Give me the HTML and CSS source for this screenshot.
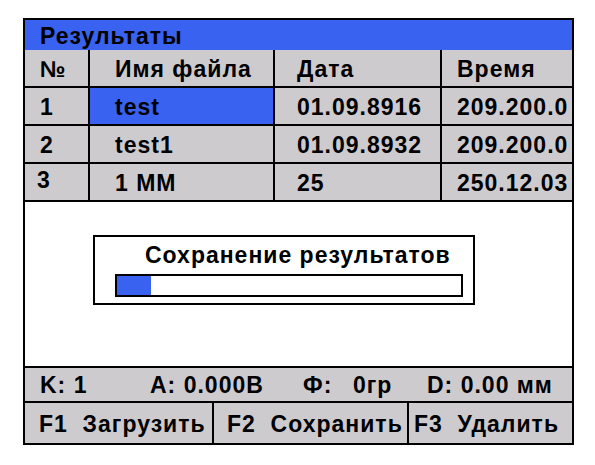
FILE: index.html
```html
<!DOCTYPE html>
<html lang="ru">

<head>
    <meta charset="UTF-8">
    <title>Результаты</title>
    <link rel="stylesheet" href="styles.css">
</head>

<body>
    <div class="screen">
        <div class="title">Результаты</div>

        <div class="grid">
            <div class="cell">№</div>
            <div class="cell name">Имя файла</div>
            <div class="cell date">Дата</div>
            <div class="cell">Время</div>

            <div class="cell">1</div>
            <div class="cell name selected">test</div>
            <div class="cell date">01.09.8916</div>
            <div class="cell">209.200.0</div>

            <div class="cell">2</div>
            <div class="cell name">test1</div>
            <div class="cell date">01.09.8932</div>
            <div class="cell">209.200.0</div>

            <div class="cell up">3</div>
            <div class="cell name">1 MM</div>
            <div class="cell date">25</div>
            <div class="cell">250.12.03</div>
        </div>

        <div class="work">
            <div class="dialog">
                <div class="dialogTitle">Сохранение результатов</div>
                <div class="progress">
                    <div class="fill" style="width: 10%"></div>
                </div>
            </div>
        </div>

        <div class="status">
            <span class="k">K: 1</span>
            <span class="a">A: 0.000B</span>
            <span class="f">Ф:</span>
            <span class="gr">0гр</span>
            <span class="d">D: 0.00 мм</span>
        </div>

        <div class="keys">
            <div class="key k1">F1&nbsp; Загрузить</div>
            <div class="key k2">F2&nbsp; Сохранить</div>
            <div class="key k3">F3&nbsp; Удалить</div>
        </div>
    </div>
</body>

</html>
```

FILE: styles.css
```css
* {
    box-sizing: border-box;
    margin: 0;
}

body {
    background: #fff;
    font-family: "Liberation Sans", Arial, sans-serif;
    font-weight: bold;
    font-size: 23px;
    letter-spacing: 1px;
    color: #000;
}

.screen {
    width: 551px;
    margin: 18px 0 0 23px;
    border: 2px solid #000;
}

.title {
    height: 30px;
    background: #3a62f0;
    padding-left: 15px;
    line-height: 32px;
}

.grid {
    display: grid;
    grid-template-columns: 63px 183px 165px 1fr;
    grid-auto-rows: 36px;
    gap: 2px;
    background: #000;
    border-bottom: 2px solid #000;
}

.cell {
    background: #cecbce;
    padding-left: 15px;
    line-height: 38px;
    white-space: nowrap;
    overflow: hidden;
}

.cell.name {
    padding-left: 25px;
}

.cell.date {
    padding-left: 22px;
}

.cell.up {
    padding-left: 12px;
    line-height: 32px;
}

.selected {
    background: #3a62f0;
}

.work {
    height: 166px;
    padding: 33px 0 0 68px;
    border-bottom: 2px solid #000;
}

.dialog {
    width: 382px;
    height: 70px;
    border: 2px solid #000;
    padding: 6px 0 0 20px;
}

.dialogTitle {
    padding-left: 30px;
    line-height: 24px;
    margin-bottom: 7px;
    white-space: nowrap;
}

.progress {
    width: 348px;
    height: 23px;
    border: 2px solid #000;
}

.fill {
    height: 100%;
    background: #3a62f0;
}

.status {
    height: 35px;
    background: #cecbce;
    border-bottom: 2px solid #000;
    line-height: 35px;
    position: relative;
}

.status span {
    position: absolute;
    top: 0;
    white-space: nowrap;
}

.k { left: 15px; }
.a { left: 125px; }
.f { left: 278px; }
.gr { left: 328px; }
.d { left: 402px; }

.keys {
    display: grid;
    grid-template-columns: 187px 193px 1fr;
    grid-template-rows: 40px;
    gap: 2px;
    background: #000;
}

.key {
    background: #cecbce;
    padding: 2px 0 0 14px;
    line-height: 38px;
    white-space: nowrap;
    overflow: hidden;
}

.k2 { padding-left: 13px; }
.k3 { padding-left: 5px; }
```
